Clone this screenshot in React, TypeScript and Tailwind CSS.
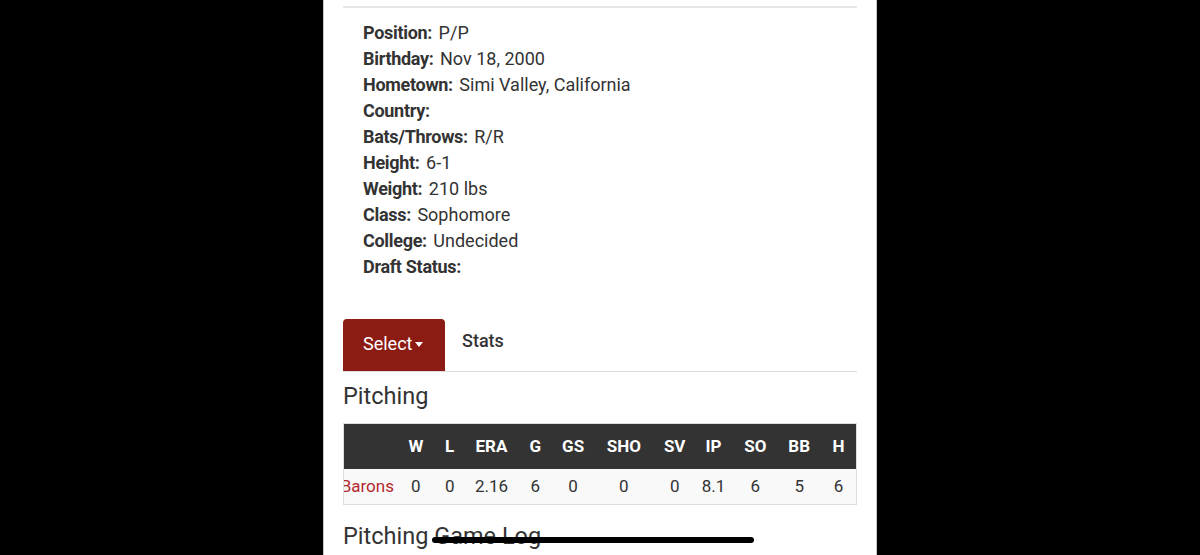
import { Fragment } from 'react';

const INFO: [string, string][] = [
  ['Position:', 'P/P'],
  ['Birthday:', 'Nov 18, 2000'],
  ['Hometown:', 'Simi Valley, California'],
  ['Country:', ''],
  ['Bats/Throws:', 'R/R'],
  ['Height:', '6-1'],
  ['Weight:', '210 lbs'],
  ['Class:', 'Sophomore'],
  ['College:', 'Undecided'],
  ['Draft Status:', ''],
];

// column label, width in px, value for the single season row
const COLUMNS: [string, string, string][] = [
  ['W', 'w-[34px]', '0'],
  ['L', 'w-[34px]', '0'],
  ['ERA', 'w-[50px]', '2.16'],
  ['G', 'w-[38px]', '6'],
  ['GS', 'w-[38px]', '0'],
  ['SHO', 'w-[64px]', '0'],
  ['SV', 'w-[38px]', '0'],
  ['IP', 'w-[40px]', '8.1'],
  ['SO', 'w-[44px]', '6'],
  ['BB', 'w-[44px]', '5'],
  ['H', 'w-[35px]', '6'],
];

export default function App() {
  return (
    <div className="relative h-[555px] w-[1200px] overflow-hidden bg-black font-['Roboto',sans-serif] text-[#333]">
      <div className="ml-[323px] h-full w-[554px] border-x border-[#c8c8c8] bg-white px-[19px] pt-[6px]">
        <div className="border-t-2 border-[#e6e6e6]" />

        {/* Player bio */}
        <dl className="mt-[12px] pl-[20px] text-[18px] leading-[26px]">
          {INFO.map(([label, value]) => (
            <div key={label}>
              <dt className="inline font-bold tracking-[-0.3px]">{label}</dt>{' '}
              <dd className="ml-[2px] inline">{value}</dd>
            </div>
          ))}
        </dl>

        {/* Tabs */}
        <div className="mt-[39px] flex items-stretch border-b border-[#dddddd]">
          <button
            type="button"
            className="flex h-[52px] w-[102px] items-center rounded-t-[4px] bg-[#8c1b13] pb-[4px] pl-[20px] text-[18px] text-white"
          >
            Select
            <span className="ml-[3px] mt-[3px] h-0 w-0 border-x-[4.5px] border-t-[5px] border-x-transparent border-t-white" />
          </button>
          <span className="flex items-center pb-[10px] pl-[17px] text-[18px] font-medium">
            Stats
          </span>
        </div>

        <h2 className="mt-[10px] text-[23.5px] leading-[28px]">Pitching</h2>

        {/* Stats table, scrolled a touch to the right like the original */}
        <div className="mt-[13px] overflow-hidden border border-[#dddddd]">
          <table className="-ml-[8px] table-fixed border-collapse text-[17px]">
            <thead>
              <tr className="h-[45px] bg-[#333333] text-white">
                <th className="w-[63px]" />
                {COLUMNS.map(([label, w]) => (
                  <th key={label} className={`${w} text-center font-bold`}>
                    {label}
                  </th>
                ))}
              </tr>
            </thead>
            <tbody>
              <tr className="h-[35px] bg-[#f9f9f9]">
                <td className="pr-[5px] text-right text-[#b3282d]">Barons</td>
                {COLUMNS.map(([label, , value]) => (
                  <Fragment key={label}>
                    <td className="text-center">{value}</td>
                  </Fragment>
                ))}
              </tr>
            </tbody>
          </table>
        </div>

        <h2 className="mt-[17px] text-[23.5px] leading-[28px]">Pitching Game Log</h2>
      </div>

      {/* iOS home indicator */}
      <div className="absolute left-[432px] top-[537px] h-[6px] w-[322px] rounded-full bg-black" />
    </div>
  );
}
